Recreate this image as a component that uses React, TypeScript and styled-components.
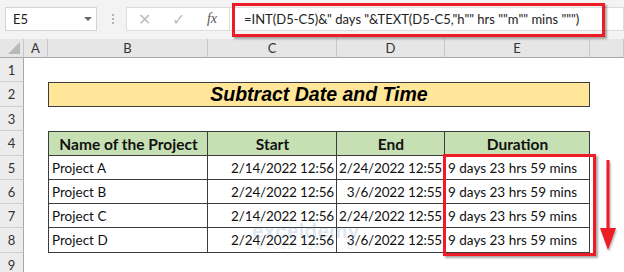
import React from 'react';
import styled, { createGlobalStyle } from 'styled-components';

const GlobalStyle = createGlobalStyle`
  html, body {
    margin: 0;
    padding: 0;
    background: #ffffff;
    overflow: hidden;
  }
  * { box-sizing: border-box; }
`;

const CELL_FONT = `Lato, "Open Sans", sans-serif`;
const UI_FONT = `Lato, "Noto Sans", sans-serif`;

const Window = styled.div`
  position: relative;
  width: 624px;
  height: 272px;
  overflow: hidden;
  background: #ffffff;
`;

const FormulaBar = styled.div`
  display: flex;
  align-items: center;
  height: 39px;
  padding: 0 0 1px 5px;
  background: #f3f3f3;
`;

const NameBox = styled.div`
  display: flex;
  align-items: center;
  justify-content: space-between;
  width: 92px;
  height: 24px;
  padding: 0 4px 0 7px;
  background: #ffffff;
  border: 1px solid #d4d4d4;
  font-family: ${UI_FONT};
  font-size: 13px;
  color: #222;
`;

const Caret = styled.span`
  width: 0;
  height: 0;
  border-left: 4px solid transparent;
  border-right: 4px solid transparent;
  border-top: 4px solid #666;
`;

const Grip = styled.div`
  display: flex;
  flex-direction: column;
  gap: 2px;
  margin: 0 12px 0 15px;
  span {
    width: 2px;
    height: 2px;
    background: #b5b5b5;
  }
`;

const ButtonBox = styled.div`
  display: flex;
  align-items: center;
  width: 103px;
  height: 24px;
  background: #ffffff;
  border: 1px solid #dcdcdc;
  border-right: none;
`;

const BarButton = styled.span<{ $dark?: boolean }>`
  flex: 1;
  text-align: center;
  font-family: ${({ $dark }) => ($dark ? '"Liberation Serif", serif' : UI_FONT)};
  font-style: ${({ $dark }) => ($dark ? 'italic' : 'normal')};
  font-size: ${({ $dark }) => ($dark ? '14px' : '16px')};
  color: ${({ $dark }) => ($dark ? '#555' : '#bdbdbd')};
`;

const FormulaInput = styled.div`
  flex: 1;
  display: flex;
  align-items: center;
  height: 24px;
  padding-left: 14px;
  background: #ffffff;
  border: 1px solid #dcdcdc;
  font-family: ${UI_FONT};
  font-size: 13px;
  color: #222;
  white-space: nowrap;
`;

const Sheet = styled.div`
  display: grid;
  grid-template-columns: 24px 24px 160px 129px 108px 145px 1fr;
  grid-template-rows: 19px 24px 25px 24px 25px 24px 24px 24px 25px 24px;
`;

const Corner = styled.div`
  position: relative;
  background: #e6e6e6;
  border-right: 1px solid #c8c8c8;
  border-bottom: 1px solid #a8a8a8;
  &::after {
    content: '';
    position: absolute;
    right: 3px;
    bottom: 3px;
    border-left: 12px solid transparent;
    border-bottom: 12px solid #b9b9b9;
  }
`;

const ColHeader = styled.div`
  display: flex;
  align-items: center;
  justify-content: center;
  background: #e6e6e6;
  border-right: 1px solid #c8c8c8;
  border-bottom: 1px solid #a8a8a8;
  font-family: ${UI_FONT};
  font-size: 13px;
  color: #333;
`;

const RowHeader = styled.div`
  display: flex;
  align-items: center;
  justify-content: center;
  background: #ececec;
  border-right: 1px solid #a8a8a8;
  border-bottom: 1px solid #cfcfcf;
  font-family: ${UI_FONT};
  font-size: 13px;
  color: #333;
`;

const Empty = styled.div``;

const Title = styled.div`
  grid-column: span 4;
  display: flex;
  align-items: center;
  justify-content: center;
  background: #ffe699;
  border: 1px solid #3c3c3c;
  font-family: "Liberation Sans", Arial, sans-serif;
  font-weight: bold;
  font-style: italic;
  font-size: 19.5px;
  color: #000;
`;

type Align = 'left' | 'right' | 'center';

const Cell = styled.div<{ $align: Align; $head?: boolean; $first?: boolean; $top?: boolean }>`
  display: flex;
  align-items: center;
  justify-content: ${({ $align }) =>
    $align === 'left' ? 'flex-start' : $align === 'right' ? 'flex-end' : 'center'};
  padding: 0 2px 0 3px;
  overflow: hidden;
  white-space: nowrap;
  background: ${({ $head }) => ($head ? '#c6e0b4' : '#ffffff')};
  border-right: 1px solid #3c3c3c;
  border-bottom: 1px solid #3c3c3c;
  border-left: ${({ $first }) => ($first ? '1px solid #3c3c3c' : 'none')};
  border-top: ${({ $top }) => ($top ? '1px solid #3c3c3c' : 'none')};
  font-family: ${CELL_FONT};
  font-size: ${({ $head }) => ($head ? '15.5px' : '13.5px')};
  font-weight: ${({ $head }) => ($head ? 700 : 400)};
  letter-spacing: ${({ $align }) => ($align === 'right' ? '-0.15px' : '0')};
  color: #111;
`;

const Highlight = styled.div<{ $x: number; $y: number; $w: number; $h: number }>`
  position: absolute;
  left: ${({ $x }) => $x}px;
  top: ${({ $y }) => $y}px;
  width: ${({ $w }) => $w}px;
  height: ${({ $h }) => $h}px;
  border: 3px solid #ee1c25;
  box-shadow: 2px 2px 2px rgba(0, 0, 0, 0.35);
  pointer-events: none;
`;

const Arrow = styled.svg`
  position: absolute;
  left: 598px;
  top: 158px;
  filter: drop-shadow(1px 2px 1px rgba(0, 0, 0, 0.3));
`;

const Watermark = styled.div`
  position: absolute;
  left: 252px;
  top: 220px;
  display: flex;
  flex-direction: column;
  align-items: flex-end;
  opacity: 0.18;
  pointer-events: none;
`;

const MarkName = styled.span`
  font-family: "Liberation Sans", sans-serif;
  font-weight: bold;
  font-size: 21px;
  color: #5a7fb5;
  line-height: 22px;
`;

const MarkTag = styled.span`
  font-family: "Liberation Sans", sans-serif;
  font-size: 8px;
  letter-spacing: 2px;
  color: #6c7a89;
`;

const rows = [
  ['Project A', '2/14/2022 12:56', '2/24/2022 12:55'],
  ['Project B', '2/24/2022 12:56', '3/6/2022 12:55'],
  ['Project C', '2/14/2022 12:56', '2/24/2022 12:55'],
  ['Project D', '2/24/2022 12:56', '3/6/2022 12:55'],
];

const formula = '=INT(D5-C5)&" days "&TEXT(D5-C5,"h"" hrs ""m"" mins """)';

export default function App() {
  return (
    <Window>
      <GlobalStyle />
      <FormulaBar>
        <NameBox>
          E5
          <Caret />
        </NameBox>
        <Grip>
          <span />
          <span />
          <span />
        </Grip>
        <ButtonBox>
          <BarButton>✕</BarButton>
          <BarButton>✓</BarButton>
          <BarButton $dark>fx</BarButton>
        </ButtonBox>
        <FormulaInput>{formula}</FormulaInput>
      </FormulaBar>

      <Sheet>
        <Corner />
        {['A', 'B', 'C', 'D', 'E', ''].map((c, i) => (
          <ColHeader key={i}>{c}</ColHeader>
        ))}

        <RowHeader>1</RowHeader>
        <Empty />
        <Empty />
        <Empty />
        <Empty />
        <Empty />
        <Empty />

        <RowHeader>2</RowHeader>
        <Empty />
        <Title>Subtract Date and Time</Title>
        <Empty />

        <RowHeader>3</RowHeader>
        <Empty />
        <Empty />
        <Empty />
        <Empty />
        <Empty />
        <Empty />

        <RowHeader>4</RowHeader>
        <Empty />
        <Cell $align="center" $head $first $top>Name of the Project</Cell>
        <Cell $align="center" $head $top>Start</Cell>
        <Cell $align="center" $head $top>End</Cell>
        <Cell $align="center" $head $top>Duration</Cell>
        <Empty />

        {rows.map(([name, start, end], i) => (
          <React.Fragment key={name}>
            <RowHeader>{i + 5}</RowHeader>
            <Empty />
            <Cell $align="left" $first>{name}</Cell>
            <Cell $align="right">{start}</Cell>
            <Cell $align="right">{end}</Cell>
            <Cell $align="left">9 days 23 hrs 59 mins</Cell>
            <Empty />
          </React.Fragment>
        ))}

        <RowHeader>9</RowHeader>
      </Sheet>

      <Highlight $x={232} $y={3} $w={373} $h={34} />
      <Highlight $x={443} $y={154} $w={153} $h={102} />
      <Arrow width="20" height="94" viewBox="0 0 20 94">
        <rect x="8.5" y="2" width="3" height="70" fill="#ee1c25" />
        <polygon points="2,70 18,70 10,92" fill="#ee1c25" />
      </Arrow>

      <Watermark>
        <MarkName>exceldemy</MarkName>
        <MarkTag>EXCEL · DATA · BI</MarkTag>
      </Watermark>
    </Window>
  );
}
